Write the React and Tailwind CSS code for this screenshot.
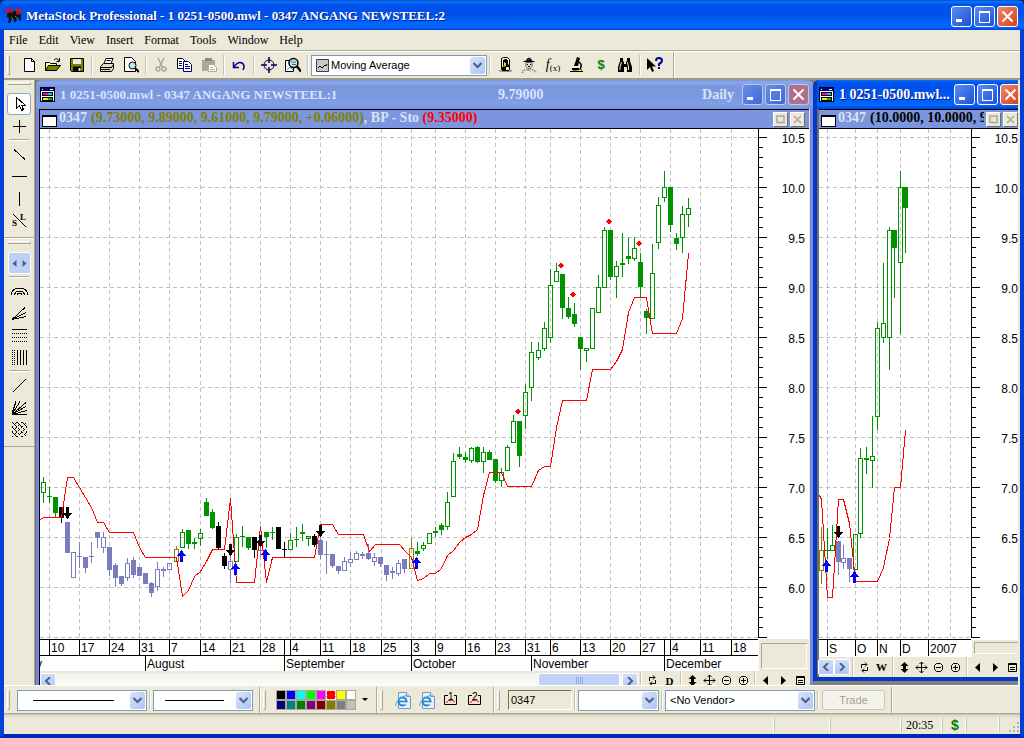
import clsx from "clsx";

const SANS = "font-['Liberation_Sans',Arial,sans-serif]";

const COLORS = { g: "#009300", l: "#7b7bbf", k: "#000000", o: "#848200" };

// x, high, body top, body bottom, low, kind (upper case = filled body)
const DAILY = [
  [43, 477, 482, 492, 502, "g"], [49, 487, 496, 496, 502, "G"], [55, 497, 497, 512, 517, "G"],
  [61, 507, 507, 517, 522, "K"], [67, 522, 522, 552, 552, "L"], [73, 552, 552, 577, 577, "l"],
  [79, 542, 556, 556, 567, "L"], [85, 557, 557, 567, 572, "L"], [91, 542, 556, 556, 562, "L"],
  [97, 532, 532, 537, 547, "L"], [103, 532, 537, 547, 552, "l"], [109, 547, 547, 569, 575, "L"],
  [115, 563, 565, 577, 586, "L"], [121, 576, 576, 583, 585, "L"], [127, 558, 563, 577, 580, "l"],
  [133, 557, 560, 574, 577, "L"], [139, 567, 567, 575, 575, "L"], [145, 573, 573, 583, 583, "L"],
  [151, 582, 583, 592, 596, "L"], [157, 562, 569, 586, 590, "l"], [163, 567, 569, 570, 576, "L"],
  [169, 563, 563, 569, 569, "l"], [176, 546, 549, 561, 561, "o"], [182, 529, 532, 547, 547, "g"],
  [188, 530, 530, 543, 548, "G"], [194, 538, 542, 543, 548, "G"], [200, 529, 533, 538, 545, "g"],
  [206, 498, 502, 515, 515, "G"], [212, 509, 512, 527, 528, "G"], [218, 522, 526, 547, 549, "K"],
  [224, 553, 556, 565, 568, "K"], [230, 552, 561, 569, 582, "l"], [236, 534, 537, 561, 561, "g"],
  [242, 526, 536, 536, 546, "G"], [248, 537, 537, 547, 549, "G"], [254, 537, 537, 549, 557, "K"],
  [260, 546, 550, 550, 556, "L"], [266, 532, 532, 536, 547, "G"], [272, 527, 532, 532, 539, "G"],
  [278, 527, 527, 548, 548, "K"], [284, 542, 549, 549, 557, "K"], [290, 533, 540, 549, 549, "g"],
  [296, 527, 539, 539, 546, "G"], [302, 524, 532, 533, 540, "G"], [308, 536, 536, 538, 545, "g"],
  [314, 534, 536, 544, 546, "K"], [320, 538, 540, 554, 558, "L"], [326, 541, 554, 554, 573, "L"],
  [332, 554, 554, 565, 567, "L"], [338, 566, 566, 570, 573, "L"], [344, 557, 561, 570, 570, "l"],
  [350, 552, 559, 562, 566, "l"], [356, 551, 553, 559, 559, "l"], [362, 552, 554, 555, 558, "L"],
  [368, 544, 553, 558, 559, "L"], [374, 553, 557, 561, 565, "l"], [380, 557, 557, 563, 566, "L"],
  [386, 565, 565, 574, 580, "L"], [392, 567, 571, 572, 578, "L"], [398, 560, 563, 573, 575, "l"],
  [404, 559, 559, 568, 572, "L"], [411, 538, 548, 568, 568, "o"], [417, 542, 551, 553, 555, "G"],
  [423, 542, 545, 548, 550, "g"], [429, 533, 533, 543, 543, "g"], [435, 527, 531, 532, 536, "G"],
  [441, 523, 525, 529, 534, "G"], [447, 492, 502, 526, 529, "g"], [453, 453, 461, 496, 496, "g"],
  [459, 447, 454, 456, 458, "G"], [465, 452, 457, 459, 462, "G"], [471, 447, 448, 460, 462, "g"],
  [477, 446, 447, 461, 462, "G"], [483, 447, 452, 461, 472, "g"], [489, 450, 452, 459, 459, "G"],
  [495, 459, 459, 480, 482, "G"], [501, 468, 472, 480, 486, "g"], [507, 445, 447, 470, 470, "g"],
  [513, 415, 421, 442, 442, "g"], [519, 421, 421, 455, 466, "G"], [525, 384, 392, 415, 428, "g"],
  [531, 342, 352, 387, 400, "g"], [538, 342, 350, 357, 359, "g"], [544, 322, 328, 348, 350, "g"],
  [550, 269, 285, 337, 342, "g"], [556, 263, 271, 281, 281, "g"], [562, 274, 274, 307, 318, "G"],
  [568, 297, 308, 316, 318, "G"], [574, 303, 314, 323, 326, "G"], [580, 337, 337, 348, 369, "G"],
  [586, 348, 348, 350, 361, "g"], [592, 308, 308, 348, 348, "g"], [598, 275, 287, 312, 312, "g"],
  [604, 227, 230, 287, 287, "g"], [610, 230, 230, 276, 279, "G"], [616, 261, 266, 276, 297, "g"],
  [622, 233, 263, 264, 276, "G"], [628, 237, 256, 258, 263, "G"], [634, 237, 248, 258, 260, "g"],
  [640, 253, 262, 286, 297, "G"], [646, 309, 311, 317, 333, "G"], [652, 244, 273, 318, 318, "g"],
  [658, 197, 205, 242, 248, "g"], [664, 171, 187, 197, 201, "g"], [670, 187, 187, 224, 231, "G"],
  [676, 233, 238, 243, 249, "G"], [682, 206, 214, 237, 252, "g"], [688, 198, 208, 214, 226, "g"],
];

const DAILY_STOP =
  "40,519 43,517 61,517 67,477 73,477 79,487 85,497 91,507 97,522 103,522 109,532 133,532 139,547 145,557 176,557 182,596 188,590 194,576 200,571 206,561 212,549 224,549 230,498 236,582 254,582 260,526 266,582 272,557 314,557 320,524 332,524 338,534 363,534 369,551 375,544 399,544 405,551 411,557 417,580 423,578 429,573 435,573 441,568 447,555 453,550 459,542 465,537 471,534 477,529 483,495 489,472 501,472 507,486 531,486 538,470 544,466 550,466 556,427 562,400 586,400 592,369 610,369 616,361 622,349 628,312 634,297 646,297 652,333 676,333 682,318 688,253";

const WEEKLY = [
  [821, 527, 550, 570, 583, "o"], [827, 528, 550, 550, 558, "G"], [832, 525, 545, 550, 550, "g"],
  [838, 541, 541, 561, 574, "L"], [843, 545, 558, 562, 568, "l"], [849, 558, 558, 568, 581, "L"],
  [855, 534, 534, 569, 569, "g"], [860, 448, 458, 533, 537, "g"], [866, 447, 458, 459, 473, "G"],
  [872, 416, 456, 460, 487, "g"], [877, 322, 328, 416, 429, "g"], [883, 263, 323, 337, 342, "g"],
  [889, 227, 230, 337, 369, "g"], [894, 230, 230, 247, 297, "G"], [900, 171, 187, 262, 333, "g"],
  [905, 187, 187, 207, 252, "G"],
];

const WEEKLY_STOP =
  "819,495 821,499 827,597 832,597 838,499 843,499 849,523 855,581 877,581 883,567 889,538 894,487 900,487 905,430";

const DAYS = [
  [49, "10"], [79, "17"], [109, "24"], [139, "31"], [169, "7"], [200, "14"], [230, "21"], [260, "28"],
  [290, "4"], [320, "11"], [350, "18"], [381, "25"], [411, "3"], [435, "9"], [465, "16"], [495, "23"],
  [525, "31"], [550, "6"], [580, "13"], [610, "20"], [640, "27"], [670, "4"], [700, "11"], [731, "18"],
];
const MONTHS = [[145, "August"], [284, "September"], [411, "October"], [531, "November"], [664, "December"]];
const WEEKLY_MONTHS = [[827, "S"], [855, "O"], [877, "N"], [900, "D"], [928, "2007"]];

const PRICES = ["10.5", "10.0", "9.5", "9.0", "8.5", "8.0", "7.5", "7.0", "6.5", "6.0"];

function Candle({ data: [x, high, top, bottom, low, kind] }) {
  const color = COLORS[kind.toLowerCase()];
  const filled = kind !== kind.toLowerCase();
  return (
    <g>
      {high < top && <rect x={x} y={high} width="1" height={top - high} fill={color} />}
      {low > bottom && <rect x={x} y={bottom + 1} width="1" height={low - bottom} fill={color} />}
      {filled ? (
        <rect x={x - 2} y={top} width="5" height={bottom - top + 1} fill={color} />
      ) : (
        <rect x={x - 1.5} y={top + 0.5} width="4" height={bottom - top} fill="none" stroke={color} />
      )}
    </g>
  );
}

function Arrow({ x, y, down }) {
  const d = down ? "M-1 0h3v6h3l-4.500 6l-4.500 -6h3z" : "M-1 12h3v-6h3l-4.500 -6l-4.500 6h3z";
  return <path transform={`translate(${x} ${y})`} d={d} fill={down ? "#000" : "#00f"} />;
}

function Diamond({ x, y }) {
  return <path transform={`translate(${x} ${y})`} d="M-1 -2h2v1h1v1h1v1h-1v1h-1v1h-2v-1h-1v-1h-1v-1h1v-1h1z" fill="red" />;
}

function Grid({ left, axis, lines }) {
  return (
    <g shapeRendering="crispEdges">
      <g stroke="#c0c0c0" strokeDasharray="4 3">
        {Array.from({ length: 11 }, (_, i) => (
          <line key={i} x1={left} x2={axis} y1={137.5 + i * 50} y2={137.5 + i * 50} />
        ))}
        {lines.map((x) => (
          <line key={x} x1={x + 0.5} x2={x + 0.5} y1="129" y2="639" />
        ))}
      </g>
      <rect x={axis} y="129" width="1" height="509" />
      {Array.from({ length: 51 }, (_, i) => (
        <rect key={i} x={axis} y={137 + i * 10} width={i % 5 ? 5 : 9} height="1" />
      ))}
    </g>
  );
}

function PriceLabels({ x }) {
  return PRICES.map((p, i) => (
    <text key={p} x={x} y={143 + i * 50} textAnchor="end">{p}</text>
  ));
}

function DailyChart() {
  return (
    <svg className={clsx("block h-[542px] w-full bg-white text-[12px]", SANS)} role="img" aria-label="0347 daily">
      <g transform="translate(-40 -129)">
        <Grid left={40} axis={758} lines={DAYS.map(([x]) => x)} />
        <g shapeRendering="crispEdges">
          {DAILY.map((c) => <Candle key={c[0]} data={c} />)}
          <polyline points={DAILY_STOP} transform="translate(.5 .5)" fill="none" stroke="red" />
          {[[561, 265], [573, 294], [609, 221], [639, 243], [518, 411]].map(([x, y]) => <Diamond key={x} x={x} y={y} />)}
          {[[67, 507], [230, 544], [260, 535], [320, 525]].map(([x, y]) => <Arrow key={x} x={x} y={y} down />)}
          {[[181, 550], [235, 563], [265, 549], [416, 557]].map(([x, y]) => <Arrow key={x} x={x} y={y} />)}
          <rect x="759" y="639" width="50" height="33" fill="#ece9d8" />
          <path d="M761.500 668v-24.500h45" fill="none" stroke="#aca899" />
          <path d="M806.500 644v24.500h-45" fill="none" stroke="#fff" />
          <rect x="40" y="639" width="718" height="1" />
          <rect x="40" y="655" width="718" height="1" />
          {DAYS.map(([x]) => <rect key={x} x={x} y="639" width="1" height="17" />)}
          {MONTHS.map(([x, m]) => (
            <rect key={m} x={x} y={m === "August" || m === "November" ? 655 : 639} width="1" height={m === "August" || m === "November" ? 16 : 32} />
          ))}
        </g>
        <PriceLabels x={805} />
        {DAYS.map(([x, d]) => <text key={x} x={x + 2} y="652">{d}</text>)}
        <text x="36" y="668">y</text>
        {MONTHS.map(([x, m]) => <text key={m} x={x + 2} y="668">{m}</text>)}
      </g>
    </svg>
  );
}

function WeeklyChart() {
  return (
    <svg className={clsx("block h-[528px] w-full bg-white text-[12px]", SANS)} role="img" aria-label="0347 weekly">
      <g transform="translate(-819 -129)">
        <Grid left={819} axis={971} lines={[827, 855, 877, 900, 928, 950]} />
        <g shapeRendering="crispEdges">
          {WEEKLY.map((c) => <Candle key={c[0]} data={c} />)}
          <polyline points={WEEKLY_STOP} transform="translate(.5 .5)" fill="none" stroke="red" />
          <Arrow x={838} y={526} down />
          <Arrow x={826} y={560} />
          <Arrow x={854} y={571} />
          <rect x="972" y="640" width="60" height="18" fill="#ece9d8" />
          <path d="M974.500 653v-10.500h60" fill="none" stroke="#aca899" />
          <path d="M975 653.500h60" stroke="#fff" />
          <rect x="819" y="639" width="152" height="1" />
          {WEEKLY_MONTHS.map(([x]) => <rect key={x} x={x} y="639" width="1" height="17" />)}
        </g>
        <PriceLabels x={1018} />
        {WEEKLY_MONTHS.map(([x, m]) => <text key={x} x={x + 2} y="653">{m}</text>)}
      </g>
    </svg>
  );
}

function CaptionButton({ kind, inactive }) {
  return (
    <button
      aria-label={kind}
      className={clsx(
        "flex size-[21px] shrink-0 items-center justify-center rounded-[3px] border text-white",
        inactive ? "border-[#b8c9f0]" : "border-white",
        kind === "Close"
          ? inactive ? "bg-[#b0708c]" : "bg-linear-to-br from-[#f0886a] to-[#d63c14]"
          : inactive ? "bg-linear-to-br from-[#6a8de4] to-[#3f68d8]" : "bg-linear-to-br from-[#5a8cf0] to-[#1c50d8]"
      )}
    >
      <svg width="15" height="15" fill="none" stroke="currentColor" strokeWidth="2">
        {kind === "Minimize" && <path d="M2 11.500h6" strokeWidth="3" />}
        {kind === "Maximize" && <path d="M2.500 13.500v-10.500h10v10.500z M2 3.500h11" strokeWidth="1.500" shapeRendering="crispEdges" />}
        {kind === "Close" && <path d="M2.500 2.500l10 10M12.500 2.500l-10 10" />}
      </svg>
    </button>
  );
}

function CaptionButtons({ inactive }) {
  return (
    <div className="ml-auto flex shrink-0 gap-[2px]">
      <CaptionButton kind="Minimize" inactive={inactive} />
      <CaptionButton kind="Maximize" inactive={inactive} />
      <CaptionButton kind="Close" inactive={inactive} />
    </div>
  );
}

function ChartIcon() {
  return (
    <svg className="shrink-0" width="16" height="16" shapeRendering="crispEdges" aria-hidden="true">
      <path d="M0 0h15v15h-15z" />
      <path d="M1 1h13v3h-13z" fill="#000080" />
      <path d="M2 2h1v1h-1zM10 2h3v1h-3z" fill="#fff" />
      <path d="M1 4h13v10h-13z" fill="#fff" />
      <path d="M2 5h11v4h-11zM2 10h11v4h-11z" />
      <path d="M3 6h5v2h-5z" fill="#f0a" />
      <path d="M8 6h4v2h-4z" fill="#00c8e8" />
      <path d="M3 11h5v2h-5z" fill="#ee0" />
      <path d="M8 11h4v2h-4z" fill="#0b0" />
    </svg>
  );
}

function PaneHeader({ children }) {
  return (
    <div className="flex h-[20px] items-center border-y border-black bg-[#7b96de] pr-1 pl-[2px] text-[14px] leading-4 font-bold">
      <span className="mt-[3px] h-[12px] w-[15px] shrink-0 border border-t-2 border-black bg-white" />
      <div className="min-w-0 flex-1 overflow-hidden pb-[2px] pl-[2px] whitespace-nowrap">{children}</div>
      {["Restore pane", "Close pane"].map((label, i) => (
        <button key={label} aria-label={label} className="ml-[2px] size-[15px] shrink-0 border border-white border-r-[#716f64] border-b-[#716f64] bg-[#ece9d8]">
          <svg width="13" height="13" fill="none" stroke="#aca899" strokeWidth="1.500">
            {i === 0 ? <path d="M3 3h7v6.500h-7z" /> : <path d="M3 3l7 7M10 3l-7 7" />}
          </svg>
        </button>
      ))}
    </div>
  );
}

function ScrollButton({ dir }) {
  return (
    <button aria-label={`Scroll ${dir}`} className="flex size-[16px] shrink-0 items-center justify-center rounded-[2px] border border-white bg-linear-to-b from-[#d0dcfd] to-[#b4c8f6]">
      <svg width="8" height="8" fill="none" stroke="#4d6185" strokeWidth="2">
        <path d={dir === "left" ? "M6 0l-4 4l4 4" : "M2 0l4 4l-4 4"} />
      </svg>
    </button>
  );
}

const NAV_ICONS = {
  Refresh: <path d="M4.500 8v-3.500h5M8 2.500l2 2l-2 2M10.500 7v3.500h-5M7 8.500l-2 2l2 2" fill="none" stroke="#000" />,
  "Compress vertically": <path d="M7.500 2l4 4h-2.500v3h2.500l-4 4l-4 -4h2.500v-3h-2.500z" />,
  Move: <path d="M7.500 2v11M2 7.500h11M5.500 4l2 -2l2 2M5.500 11l2 2l2 -2M4 5.500l-2 2l2 2M11 5.500l2 2l-2 2" fill="none" stroke="#000" />,
  "Zoom out": <path d="M5 7.500h5M5.500 3.500h4l2 2v4l-2 2h-4l-2 -2v-4z" fill="none" stroke="#000" />,
  "Zoom in": <path d="M5 7.500h5M7.500 5v5M5.500 3.500h4l2 2v4l-2 2h-4l-2 -2v-4z" fill="none" stroke="#000" />,
  Back: <path d="M9 3v9l-5 -4.500z" />,
  Forward: <path d="M5 3v9l5 -4.500z" />,
  List: <path d="M3.500 3.500h8v8h-8zM3 4.500h9M5 7.500h5M5 9.500h5" fill="none" stroke="#000" />,
};

function NavButton({ name }) {
  return (
    <button aria-label={name} className="flex h-4 w-[17px] shrink-0 items-center justify-center">
      <svg width="15" height="15">{NAV_ICONS[name]}</svg>
    </button>
  );
}

function Sep() {
  return <span className="mx-[2px] h-5 w-[2px] shrink-0 border-r border-l border-r-white border-l-[#c5c2b8]" />;
}

function ChartNav({ period }) {
  return (
    <>
      <Sep />
      <NavButton name="Refresh" />
      <button className="h-3 w-[17px] shrink-0 text-[11px] leading-3 font-bold">{period}</button>
      <Sep />
      <NavButton name="Compress vertically" />
      <NavButton name="Move" />
      <NavButton name="Zoom out" />
      <NavButton name="Zoom in" />
      <Sep />
      <NavButton name="Back" />
      <NavButton name="Forward" />
      <NavButton name="List" />
    </>
  );
}

function DailyWindow() {
  return (
    <section className="min-w-0 flex-1 rounded-t-[6px] border-x-[3px] border-[#7b86df] bg-[#7b96df]">
      <header className="-mx-[3px] flex h-[29px] items-center rounded-t-[6px] bg-[linear-gradient(#7697e7,#8ca6e6_8%,#7996de_25%,#7b99e1_56%,#7f9fe6_85%,#7a93df)] pr-1 pl-1 text-[13px] font-bold text-[#d8e4f8]">
        <ChartIcon />
        <h2 className="w-[442px] pl-1 whitespace-nowrap">1 0251-0500.mwl - 0347 ANGANG NEWSTEEL:1</h2>
        <span className="text-[14px]">9.79000</span>
        <span className="mr-2 ml-auto text-[14px]">Daily</span>
        <div><CaptionButtons inactive /></div>
      </header>
      <div className="border-r border-l border-r-[#ece9d8] border-l-black bg-[#ece9d8]">
        <PaneHeader>
          <span className="mr-1 text-[#d8e4f8]">0347</span>
          <span className="text-[#808000]">(9.73000, 9.89000, 9.61000, 9.79000, +0.06000)</span>
          <span className="text-[#d8e4f8]">, BP - Sto </span>
          <span className="text-[#f00]">(9.35000)</span>
        </PaneHeader>
        <DailyChart />
        <div className="mt-px flex h-[17px] items-center">
          <div className="flex min-w-0 flex-1 justify-between bg-linear-to-b from-[#f3f1ec] to-[#fefefb]">
            <ScrollButton dir="left" />
            <div className="flex">
              <div className="mr-[2px] flex h-4 w-[82px] items-center justify-center rounded-[2px] border border-white bg-[#c2d2fb] text-[#8fa9e8]">
                <svg width="9" height="7" shapeRendering="crispEdges"><path d="M1.500 0v7M3.500 0v7M5.500 0v7M7.500 0v7" stroke="currentColor" /></svg>
              </div>
              <ScrollButton dir="right" />
            </div>
          </div>
          <ChartNav period="D" />
        </div>
      </div>
    </section>
  );
}

function WeeklyWindow() {
  return (
    <section className="w-[205px] shrink-0 self-start overflow-hidden rounded-tl-[6px] border-b-4 border-l-4 border-[#0038c8] bg-[#0055e5]">
      <header className="-ml-1 flex h-[29px] w-[212px] items-center rounded-t-[6px] bg-[linear-gradient(#0a70f0,#0053ee_10%,#0050ee_40%,#0066ff_88%,#003dd7)] pr-1 pl-[6px] text-[14px] font-bold text-white text-shadow-[1px_1px_0_#0a1883]">
        <ChartIcon />
        <h2 className="pl-1 whitespace-nowrap">1 0251-0500.mwl...</h2>
        <CaptionButtons />
      </header>
      <div className="border-l-2 border-[#716f64] bg-[#ece9d8]">
        <div className="w-[203px]">
          <PaneHeader>
            <span className="mr-1 text-[#d8e4f8]">0347</span>
            <span>(10.0000, 10.0000, 9</span>
          </PaneHeader>
        </div>
        <WeeklyChart />
        <div className="-ml-px flex h-5 items-center overflow-hidden">
          <ScrollButton dir="left" />
          <ScrollButton dir="right" />
          <ChartNav period="W" />
        </div>
      </div>
    </section>
  );
}

const TOOL_ICONS = {
  New: <path d="M3.500 1.500h7l3 3v10h-10zM10.500 1.500v3h3" fill="#fff" stroke="#000" />,
  Open: (
    <>
      <path d="M.5 13.500v-8h4l1 1h6v3" fill="#ffff80" stroke="#000" />
      <path d="M.5 13.500l3 -5h12l-4 5z" fill="#808000" stroke="#000" />
      <path d="M9 3q3 -3 5 1M14.500 1v3.500h-3" fill="none" stroke="#000" />
    </>
  ),
  Save: (
    <>
      <path d="M1.500 1.500h13v13h-12l-1 -1z" fill="#808000" stroke="#000" />
      <path d="M4 2h8v5h-8z" fill="#ece9d8" />
      <path d="M4 9.500h8v5h-8z" />
      <path d="M9.500 11h2v3h-2z" fill="#ece9d8" />
    </>
  ),
  Print: (
    <>
      <path d="M5 6.500l2 -5h7l-2 5z" fill="#fff" stroke="#000" />
      <path d="M1.500 9.500l3 -3h10v5l-2 3h-11z" fill="#e0ddd0" stroke="#000" />
      <path d="M1 10.500h12M2 12.500h9M12.500 10.500l2 -3M7.500 3.500h4" stroke="#000" fill="none" />
      <path d="M8 11h3v1h-3z" fill="#e0e000" />
    </>
  ),
  Preview: (
    <>
      <path d="M1.500 .5h7l4 4v10h-11z" fill="#fff" stroke="#000" />
      <circle cx="9.500" cy="8.500" r="3.500" fill="#b0f0f0" stroke="#000" />
      <path d="M12 11l4 4" stroke="#000" strokeWidth="2" />
    </>
  ),
  Cut: (
    <g fill="none" stroke="#aca899" strokeWidth="1.500">
      <path d="M5 1l4.500 9M11 1l-4.500 9" />
      <circle cx="5" cy="12" r="2" />
      <circle cx="11" cy="12" r="2" />
    </g>
  ),
  Copy: (
    <>
      <path d="M.5 1.500h5l3 3v7h-8z" fill="#fff" stroke="#000" />
      <path d="M6.500 4.500h5l3 3v7h-8z" fill="#fff" stroke="#000080" />
      <path d="M2 4.500h3M2 6.500h3M2 8.500h3M8 7.500h3M8 9.500h5M8 11.500h5" stroke="#000080" />
    </>
  ),
  Paste: (
    <>
      <path d="M1 3h13v11h-13z" fill="#aca899" />
      <path d="M4 1h7v3h-7z" fill="#8c897c" />
      <path d="M7.500 7.500h5l3 3v4h-8z" fill="#fff" stroke="#aca899" />
      <path d="M9 10.500h3M9 12.500h5" stroke="#aca899" />
    </>
  ),
  Undo: <path d="M2.500 5v5.500h5.500M3 10q4 -6 8 -4q3.500 2 1 7" fill="none" stroke="#000090" strokeWidth="1.500" />,
  Crosshair: (
    <g fill="none" stroke="#000050">
      <circle cx="8" cy="8" r="5" />
      <path d="M8 0v6M8 10v6M0 8h6M10 8h6" strokeWidth="1.500" />
    </g>
  ),
  "Find in chart": (
    <>
      <path d="M.5 3.500h8v11h-8z" fill="#fff" stroke="#000" />
      <path d="M2 13l3 -3l3 3" stroke="#00c0c0" fill="none" />
      <circle cx="8.500" cy="6" r="4.500" fill="#b8f0f0" stroke="#000" strokeWidth="1.500" />
      <path d="M6 5h5M7 7.500h4" stroke="#606060" />
      <path d="M12 9.500l4 5" stroke="#000" strokeWidth="2.500" />
    </>
  ),
  Explorer: (
    <>
      <path d="M4.500 1.500l2 -1h4l2 2v9l-1 2h-6l-1 -2z" fill="#fff" stroke="#000" />
      <path d="M6 3l2 -1h2l1 2v3l2 2v4l-2 1h-5l-2 -2l2 -3z" />
      <path d="M7 5l2 1v3l-3 1l1 -2z" fill="#f0e000" />
      <path d="M9 10h3v3h-3z" fill="#ece9d8" />
      <path d="M1 13h3v1h9v-1h2v1l-2 1h-9z" fill="#8c897c" />
    </>
  ),
  "Expert advisor": (
    <>
      <path d="M2.500 4.500h11M5 4q3 -6 6 0z" fill="#202060" stroke="#000" />
      <path d="M5 5.500h6v4l-2 2h-2l-2 -2z" fill="#e8e0d0" stroke="#606060" />
      <path d="M6 7.500h1M9 7.500h1M7 9.500h2" stroke="#000" />
      <path d="M1.500 16v-2l5 -2l1.500 2l1.500 -2l5 2v2" fill="none" stroke="#8c897c" strokeWidth="2" strokeDasharray="1 1" />
    </>
  ),
  "System tester": (
    <>
      <path d="M8 0l3 1l-2 8h-4zM3 11h7v2h-7z" />
      <path d="M10 5q4 3 1 7" fill="none" stroke="#000" strokeWidth="1.500" />
      <path d="M1 14.500h13M4 13h9" stroke="#000" />
      <path d="M8 13.500h4" stroke="#f0e000" />
    </>
  ),
  Binoculars: (
    <>
      <path d="M3 1h3v3l1 1v2h2v-2l1 -1v-3h3v3l2 6v5h-5v-5h-3v5h-6v-5l2 -6z" />
      <path d="M4.500 5l-1.500 5v3M10.500 5l1 5v3" stroke="#ece9d8" fill="none" />
    </>
  ),
  "Context help": (
    <>
      <path d="M0 1v12l3 -3l2 5l2 -1l-2 -4.500h4z" />
      <path d="M9 4q0 -3 3 -3q3 0 3 2.500q0 2 -3 3.500v2M12 10v2" fill="none" stroke="#000090" strokeWidth="2" />
    </>
  ),
};

function ToolButton({ name, children }) {
  return (
    <button aria-label={name} className="flex h-[22px] w-6 shrink-0 items-center justify-center">
      {children ?? <svg width="16" height="16">{TOOL_ICONS[name]}</svg>}
    </button>
  );
}

function Combo({ label, options, className, children }) {
  return (
    <div className={clsx("relative h-[21px] shrink-0 border border-[#7f9db9] bg-white", className)}>
      {children && <div className="pointer-events-none absolute inset-y-0 left-1 flex items-center">{children}</div>}
      <select aria-label={label} className={clsx("block size-full appearance-none bg-transparent pr-5 text-[11px] outline-none", SANS, options[0] === "Moving Average" ? "pl-[19px]" : "pl-1")}>
        {options.map((o) => <option key={o}>{o}</option>)}
      </select>
      <span className="pointer-events-none absolute inset-y-px right-px flex w-[15px] items-center justify-center rounded-[2px] bg-linear-to-br from-[#d8e4fc] to-[#aec4f4]">
        <svg width="9" height="7" fill="none" stroke="#4d6185" strokeWidth="2"><path d="M.5 1l4 4l4 -4" /></svg>
      </span>
    </div>
  );
}

function Grip() {
  return <span className="ml-[2px] h-5 w-[3px] shrink-0 border border-white border-r-[#aca899] border-b-[#aca899]" />;
}

function BandEnd() {
  return <span className="h-[26px] w-[2px] shrink-0 border-r border-l border-r-white border-l-[#aca899]" />;
}

function MainToolbar() {
  return (
    <div className="flex h-7 items-center border-b-2 border-b-[#9c9a8c] pl-px">
      <Grip />
      <span className="w-[7px] shrink-0" />
      {["New", "Open", "Save"].map((n) => <ToolButton key={n} name={n} />)}
      <Sep />
      {["Print", "Preview"].map((n) => <ToolButton key={n} name={n} />)}
      <Sep />
      {["Cut", "Copy", "Paste"].map((n) => <ToolButton key={n} name={n} />)}
      <Sep />
      <ToolButton name="Undo" />
      <Sep />
      {["Crosshair", "Find in chart"].map((n) => <ToolButton key={n} name={n} />)}
      <Sep />
      <Combo label="Indicator" options={["Moving Average"]} className="w-[176px]">
        <svg width="13" height="13"><path d="M.5 .5h12v12h-12z" fill="#c8c8c8" stroke="#404040" /><path d="M2 9l2 -2l2 2l3 -3l1 1l1 -2" fill="none" stroke="#000" /></svg>
      </Combo>
      <Sep />
      <ToolButton name="Explorer" />
      <ToolButton name="Expert advisor" />
      <ToolButton name="Functions"><span className="text-[14px] leading-4 italic">f<sub className="text-[9px] not-italic">(x)</sub></span></ToolButton>
      <ToolButton name="System tester" />
      <ToolButton name="Quotes"><span className={clsx("text-[13px] font-bold text-[#008000]", SANS)}>$</span></ToolButton>
      <ToolButton name="Binoculars" />
      <Sep />
      <ToolButton name="Context help" />
      <span className="w-[6px] shrink-0" />
      <BandEnd />
    </div>
  );
}

const DRAW_ICONS = {
  Pointer: <path d="M5.500 1.500v11l3 -3l2 5l2 -1l-2 -4.500h3.500z" fill="#fff" stroke="#000" />,
  Cross: <path d="M8.500 2v13M2 8.500h13" />,
  Trendline: <path d="M3 3.500l11 10" />,
  "Horizontal line": <path d="M1 8.500h15" />,
  "Vertical line": <path d="M8.500 2v14" />,
  "Arc set": <path d="M.5 12v-2q2 -5 8 -5q6 0 8 5v2M3.500 12v-1q1.500 -3 5 -3q3.500 0 5 3v1M6.500 12q0 -2 2 -2q2 0 2 2" />,
  "Speed lines": <path d="M1 14.500l13 -12M1 14.500l14 -7M1 14.500l14 -3" />,
  Retracement: <path d="M1 2.500h15" />,
  "Time zones": <path d="M6.500 1v15M9.500 1v15M12.500 1v15M15.500 1v15" />,
  "Regression line": <path d="M2 15l13 -13" />,
  "Gann fan": <path d="M1 15.500v-1l4 -12M1 15.500l8 -13M1 15.500l14 -12M1 15.500l14 -8M1 15.500l15 -4M1 15.500h15" />,
  "Gann grid": (
    <path
      d="M1 6l5 -5M1 11l10 -10M1 16l15 -15M6 16l10 -10M11 16l5 -5M11 1l5 5M6 1l10 10M1 1l15 15M1 6l10 10M1 11l5 5"
      strokeDasharray="1.414 .7"
    />
  ),
};

function DrawButton({ name, active, children }) {
  return (
    <button
      aria-label={name}
      className={clsx("flex h-[22px] w-6 items-center justify-center", active && "rounded-[3px] border border-[#8aa8c8] bg-[#fcfcfb]")}
    >
      {children ?? (
        <svg width="17" height="17" fill="none" stroke="#000" shapeRendering="crispEdges">
          {DRAW_ICONS[name]}
          {name === "Retracement" && <path d="M1 6.500h15M1 10.500h15M1 14.500h15" strokeDasharray="1 1" />}
          {name === "Time zones" && <path d="M1.500 1v15M3.500 1v15" strokeDasharray="1 1" />}
        </svg>
      )}
    </button>
  );
}

function HSep() {
  return <span className="my-[2px] h-[2px] w-5 border-t border-b border-t-[#aca899] border-b-white" />;
}

function HGrip() {
  return <span className="h-[3px] w-6 border border-white border-r-[#aca899] border-b-[#aca899]" />;
}

function DrawToolbar() {
  return (
    <nav aria-label="Drawing tools" className="w-[31px] shrink-0 border-r border-[#aca899]">
      <div className="flex flex-col items-center border-b border-[#aca899] pt-[2px] pb-[6px]">
        <HGrip />
        <span className="h-2" />
        <DrawButton name="Pointer" active />
        <DrawButton name="Cross" />
        <HSep />
        <DrawButton name="Trendline" />
        <DrawButton name="Horizontal line" />
        <DrawButton name="Vertical line" />
        <DrawButton name="Stop and limit">
          <svg width="17" height="17" className="font-['Liberation_Serif',serif] text-[9px] font-bold">
            <path d="M2 2l13 13" stroke="#000" shapeRendering="crispEdges" />
            <text x="1" y="14">S</text>
            <text x="9" y="8">L</text>
          </svg>
        </DrawButton>
      </div>
      <div className="flex flex-col items-center border-t border-b border-t-white border-b-[#aca899] pt-[2px] pb-[6px]">
        <HGrip />
        <span className="h-2" />
        <DrawButton name="Resize">
          <span className="flex h-[22px] w-[23px] items-center justify-center rounded-[2px] border border-white bg-[#bed0f8]">
            <svg width="15" height="7" fill="#4d6185"><path d="M4.500 0v7l-4 -3.500zM10.500 0v7l4 -3.500z" /></svg>
          </span>
        </DrawButton>
        <HSep />
        <DrawButton name="Arc set" />
        <DrawButton name="Speed lines" />
        <DrawButton name="Retracement" />
        <DrawButton name="Time zones" />
        <HSep />
        <DrawButton name="Regression line" />
        <DrawButton name="Gann fan" />
        <DrawButton name="Gann grid" />
      </div>
    </nav>
  );
}

const PALETTE = [
  ["Black", "bg-[#000000]"], ["Blue", "bg-[#0000ff]"], ["Cyan", "bg-[#00ffff]"], ["Lime", "bg-[#00ff00]"],
  ["Magenta", "bg-[#ff00ff]"], ["Red", "bg-[#ff0000]"], ["Yellow", "bg-[#ffff00]"], ["White", "bg-[#ffffff]"],
  ["Navy", "bg-[#000080]"], ["Teal", "bg-[#008080]"], ["Green", "bg-[#008000]"], ["Purple", "bg-[#800080]"],
  ["Maroon", "bg-[#800000]"], ["Olive", "bg-[#808000]"], ["Gray", "bg-[#808080]"], ["Silver", "bg-[#c0c0c0]"],
];

function WebIcon() {
  return (
    <svg width="17" height="17">
      <path d="M3.500 .5h8l4 4v12h-12z" fill="#e4f0fa" stroke="#8098b8" />
      <path d="M11.500 .5v4h4" fill="#fff" stroke="#8098b8" />
      <circle cx="7.500" cy="9.500" r="4" fill="#e4f0fa" stroke="#2088d0" strokeWidth="2" />
      <path d="M4 9.500h7.500" stroke="#2088d0" strokeWidth="1.500" />
      <path d="M9 11.500h4" stroke="#e4f0fa" strokeWidth="2" />
      <path d="M1 14q-1 -4 5 -8q6 -4 8 -2" fill="none" stroke="#48b0e8" />
    </svg>
  );
}

function LayoutIcon({ n }) {
  return (
    <svg width="16" height="16" className={clsx("text-[10px]", SANS)}>
      <path d="M5 3.500h-3.500v9h12v-9h-2.500" fill="none" stroke="#000" />
      <path d="M3 11l3 -3l1 1l2 -1l3 2" fill="none" stroke="red" />
      <text x="5" y="8">{n}</text>
    </svg>
  );
}

function BottomToolbar() {
  return (
    <div className="flex h-[29px] shrink-0 items-center border-t border-b border-t-white border-b-[#aca899] pt-px pl-px">
      <Grip />
      <span className="w-[7px] shrink-0" />
      <Combo label="Line style" options={[""]} className="w-[130px]">
        <span className="ml-[11px] h-px w-[81px] bg-black" />
      </Combo>
      <Sep />
      <Combo label="Line weight" options={[""]} className="w-[100px]">
        <span className="ml-[7px] h-px w-[59px] bg-black" />
      </Combo>
      <span className="w-[6px] shrink-0" />
      <BandEnd />
      <Grip />
      <div className="ml-[10px] grid shrink-0 grid-cols-8">
        {PALETTE.map(([name, bg]) => (
          <button key={name} aria-label={name} className={clsx("h-[10px] w-[10px] border", bg, name === "Red" ? "border-dashed border-white" : "border-[#aca899]")} />
        ))}
      </div>
      <button aria-label="More colors" className="ml-1 h-5 w-[10px] shrink-0">
        <svg width="7" height="4" className="mx-auto"><path d="M0 0h6l-3 3z" /></svg>
      </button>
      <span className="w-[6px] shrink-0" />
      <BandEnd />
      <Grip />
      <span className="w-2 shrink-0" />
      <ToolButton name="Web page"><WebIcon /></ToolButton>
      <ToolButton name="Web links"><WebIcon /></ToolButton>
      <ToolButton name="Layout one"><LayoutIcon n="1" /></ToolButton>
      <ToolButton name="Layout two"><LayoutIcon n="2" /></ToolButton>
      <span className="w-[6px] shrink-0" />
      <BandEnd />
      <Grip />
      <input aria-label="Symbol" defaultValue="0347" className={clsx("ml-2 h-5 w-[64px] shrink-0 border border-white border-t-[#716f64] border-l-[#716f64] bg-transparent px-[2px] text-[11px] outline-none", SANS)} />
      <Sep />
      <Combo label="Order type" options={[""]} className="w-[81px]" />
      <Sep />
      <Combo label="Vendor" options={["<No Vendor>"]} className="w-[150px]" />
      <Sep />
      <button disabled className={clsx("ml-px h-5 w-[63px] shrink-0 rounded-[3px] border border-[#c9c7ba] bg-[#f3f2ec] text-[11px] text-[#a5a292]", SANS)}>Trade</button>
      <span className="w-[6px] shrink-0" />
      <BandEnd />
    </div>
  );
}

function StatusCell({ className, children }) {
  return <div className={clsx("flex h-[14px] items-center border-l border-[#c5c2b8] pl-1 shadow-[-1px_0_0_#fff]", className)}>{children}</div>;
}

function StatusBar() {
  return (
    <footer className="flex h-5 shrink-0 items-center border-t border-[#c5c2b8] bg-[linear-gradient(#dcd9c6,#ece9d8_20%)]">
      <div className="flex-1" />
      <StatusCell className="w-[56px]" />
      <StatusCell className="w-[71px]" />
      <StatusCell className="w-[41px] text-[12px] leading-3">20:35</StatusCell>
      <StatusCell className={clsx("w-6 pl-2 text-[14px] leading-3 font-bold text-[#008000]", SANS)}>$</StatusCell>
      <StatusCell className="w-[33px]" />
      <StatusCell className="w-[21px]">
        <svg width="12" height="12" className="mt-1 ml-auto" fill="#b8b4a4" shapeRendering="crispEdges">
          <path d="M9 1h2v2h-2zM5 5h2v2h-2zM9 5h2v2h-2zM1 9h2v2h-2zM5 9h2v2h-2zM9 9h2v2h-2z" />
        </svg>
      </StatusCell>
    </footer>
  );
}

function TitleBar() {
  return (
    <header className="flex h-[30px] shrink-0 items-center rounded-t-[6px] bg-[linear-gradient(#0048c8,#0a78f8_6%,#0053ee_14%,#0050e6_45%,#0066ff_80%,#0062f8_93%,#003dd7)] pt-[2px] pr-[6px] pl-[6px] text-[13px] font-bold text-white text-shadow-[1px_1px_0_#0a1883]">
      <svg width="16" height="16" className="shrink-0" aria-hidden="true">
        <path d="M1 6l3 -3l8 0l3 3v6l-2 1v-3h-2l-1 4h-2v-3h-2l-2 4h-2l1 -5l-2 -1z" fill="#111" />
        <path d="M1 5v-4l2.500 3l2.500 -3v4M15 1.500h-4v2h3v2h-4" fill="none" stroke="#e01010" strokeWidth="1.500" />
        <path d="M5 9l2 2M9 8l2 2" stroke="#777" />
      </svg>
      <h1 className="pl-1 whitespace-nowrap">MetaStock Professional - 1 0251-0500.mwl - 0347 ANGANG NEWSTEEL:2</h1>
      <CaptionButtons />
    </header>
  );
}

const MENUS = ["File", "Edit", "View", "Insert", "Format", "Tools", "Window", "Help"];

export default function App() {
  return (
    <div className="flex h-screen flex-col overflow-hidden bg-[#0a1f8f] font-['Liberation_Serif','Times_New_Roman',serif] text-black">
      <TitleBar />
      <div className="flex min-h-0 flex-1 flex-col border-x-4 border-b-4 border-[#0040d8] border-b-[#0028b4] bg-[#ece9d8]">
        <nav aria-label="Menu" className="flex h-[21px] shrink-0 items-center gap-[11px] border-b border-[#aca899] pl-[5px] text-[12px]">
          {MENUS.map((m) => <button key={m}>{m}</button>)}
        </nav>
        <div className="shrink-0 border-t border-white"><MainToolbar /></div>
        <div className="flex min-h-0 flex-1 overflow-hidden">
          <DrawToolbar />
          <main className="mr-[2px] flex min-w-0 flex-1 overflow-hidden border-l border-[#716f64] bg-[#808080]">
            <DailyWindow />
            <WeeklyWindow />
          </main>
        </div>
        <BottomToolbar />
        <StatusBar />
      </div>
    </div>
  );
}
